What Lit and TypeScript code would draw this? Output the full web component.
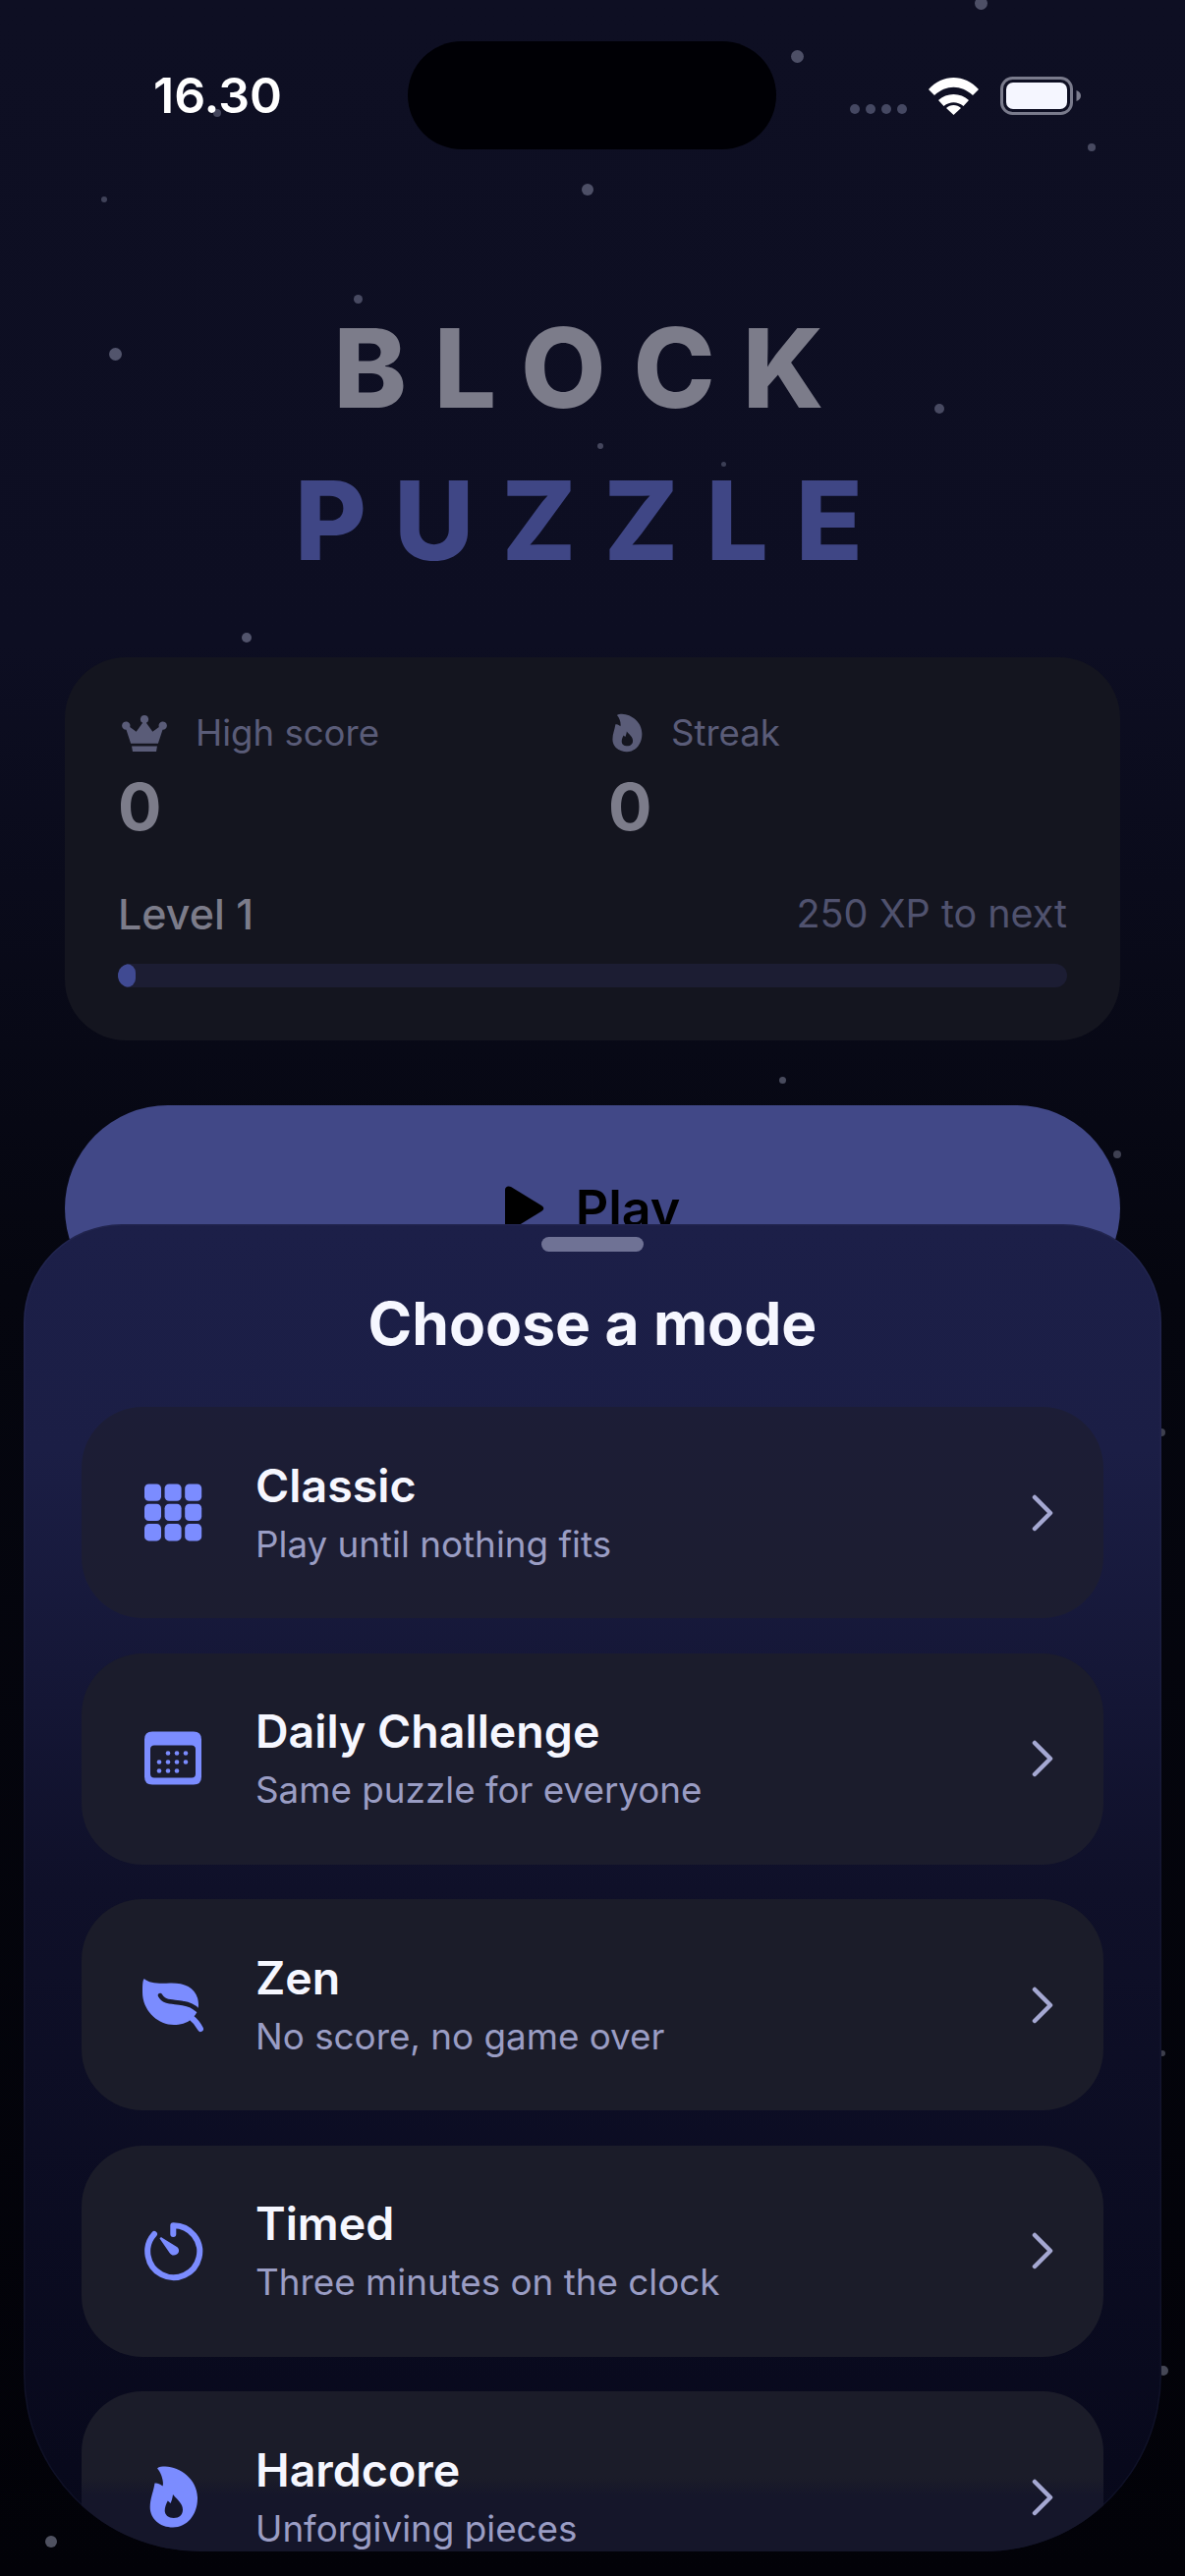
import { LitElement, html, css, svg } from 'lit';
import { customElement } from 'lit/decorators.js';

// background specks: x, y, size, opacity
const specks = [
  [998, 3, 13, .35], [811, 57, 13, .35], [1111, 150, 8, .32], [598, 193, 12, .35],
  [106, 203, 6, .28], [221, 115, 8, .3], [364, 304, 9, .32], [117, 360, 13, .38], [956, 416, 10, .32],
  [611, 454, 6, .3], [736, 472, 5, .26], [251, 649, 10, .38], [796, 1099, 7, .35],
  [1137, 1175, 8, .3], [52, 2587, 12, .4], [1182, 1458, 8, .3], [1183, 2090, 6, .3],
  [1184, 2413, 10, .35],
];

const modes = [
  { title: 'Classic', sub: 'Play until nothing fits', icon: 'grid' },
  { title: 'Daily Challenge', sub: 'Same puzzle for everyone', icon: 'calendar' },
  { title: 'Zen', sub: 'No score, no game over', icon: 'leaf' },
  { title: 'Timed', sub: 'Three minutes on the clock', icon: 'timer' },
  { title: 'Hardcore', sub: 'Unforgiving pieces', icon: 'flame' },
];

const flamePath = 'M26 5.500C28 3.500 31 3.500 34 3.500C50 4 67 17 67 36C67 53 56 65.500 42 65.500C29 65.500 18.700 57 18.700 45C18.700 36 22 30 23.500 20.500C25 20.500 29 21 31.500 23.500C33 20 30.500 10 26 5.500ZM42 32C41.500 36 40.500 39 39.500 41C38.500 40 37.500 39 36.700 38.500C35 42 33.700 45 33.700 48.500C33.700 53 37.500 56 42.700 56C48.500 56 52 52.500 52 47.500C52 41 46 37 42 32Z';

function modeIcon(name: string) {
  switch (name) {
    case 'grid':
      return svg`${[0, 1, 2].flatMap(r => [0, 1, 2].map(c => svg`<rect x=${13 + c * 20.6} y=${5.5 + r * 20.3} width="17" height="17.3" rx="4.5" />`))}`;
    case 'calendar':
      return svg`
        <path fill-rule="evenodd" d="M21 7.500H63Q71 7.500 71 15.500V53.500Q71 61.500 63 61.500H21Q13 61.500 13 53.500V15.500Q13 7.500 21 7.500ZM23 21.500Q19 21.500 19 25.500V50.500Q19 54.500 23 54.500H61Q65 54.500 65 50.500V25.500Q65 21.500 61 21.500Z" />
        ${[[37, 29.5], [46, 29.5], [55, 29.5], [28, 38.5], [37, 38.5], [46, 38.5], [55, 38.5], [28, 47.5], [37, 47.5], [46, 47.5]].map(([x, y]) => svg`<circle cx=${x} cy=${y} r="2.3" />`)}
      `;
    case 'leaf':
      return svg`
        <path d="M12.700 8C18 13 28 13 39 12.500C55 12 68 18 68 35C68 40 66 44 62 48C56 54 49 55 43 55C26 55 11 40 11 22C11 15 11 10 12.700 8Z" />
        <path d="M29 25C33 33 42 31 52 33C58 34 63 36 67 40" fill="none" stroke="#1b1c29" stroke-width="4.500" stroke-linecap="round" />
        <path d="M60 47C65 51 68 55 70 59" fill="none" stroke="#7b8cff" stroke-width="6" stroke-linecap="round" />
      `;
    case 'timer':
      return svg`
        <path d="M23 18A26.500 26.500 0 1 0 42.300 9.200V18" fill="none" stroke="#7b8cff" stroke-width="6" stroke-linecap="round" stroke-linejoin="round" />
        <path d="M28.500 22.500C29 21.500 30 21 31 21.700L46 31C49 33 48.500 37 46 38.500C43 40.500 40 39.500 38.500 37Z" />
      `;
    default:
      return svg`<path fill-rule="evenodd" d=${flamePath} />`;
  }
}

@customElement('app-root')
export class AppRoot extends LitElement {
  static styles = css`
    :host {
      display: block;
      width: 1206px;
      height: 2622px;
      font-family: Inter, 'Liberation Sans', sans-serif;
    }
    .screen {
      position: relative;
      width: 1206px;
      height: 2622px;
      overflow: hidden;
      background: linear-gradient(180deg, #0e0f23 0%, #0d0e22 25%, #05060f 50%, #020208 100%);
    }
    .speck {
      position: absolute;
      border-radius: 50%;
      background: #c3c8e6;
    }
    .status {
      position: relative;
      height: 152px;
      box-sizing: border-box;
      padding: 42px 106px 0 156px;
      display: flex;
      justify-content: space-between;
    }
    .time {
      font-size: 50px;
      font-weight: 600;
      color: #fff;
      line-height: 110px;
    }
    .island {
      position: absolute;
      left: 415px;
      top: 42px;
      width: 375px;
      height: 110px;
      border-radius: 55px;
      background: #000005;
    }
    .status-right {
      display: flex;
      align-items: center;
      height: 110px;
    }
    .title {
      margin-top: 145px;
      text-align: center;
      font-weight: 800;
      font-size: 112px;
      line-height: 155px;
      letter-spacing: 28px;
      color: #7c7c8a;
    }
    .title div + div {
      color: #3f4685;
    }
    .stats {
      margin: 62px 66px 0;
      height: 390px;
      box-sizing: border-box;
      padding: 52px 54px 0;
      background: #14151f;
      border-radius: 62px;
    }
    .stat-row {
      display: grid;
      grid-template-columns: 499px 1fr;
    }
    .stat-label {
      display: flex;
      align-items: center;
      gap: 29px;
      height: 50px;
      font-size: 36.6px;
      color: #5a5c78;
    }
    .stat-label svg {
      fill: #5a5c78;
      margin-left: 4px;
    }
    .stat-val {
      font-size: 66px;
      font-weight: 700;
      color: #7c7c8a;
      line-height: 80px;
      margin-top: 10px;
    }
    .level {
      display: flex;
      justify-content: space-between;
      align-items: center;
      margin-top: 44px;
      height: 50px;
    }
    .level b {
      font-size: 43px;
      font-weight: 500;
      color: #7c7c8a;
    }
    .level span {
      font-size: 39.5px;
      color: #50526e;
    }
    .bar {
      margin-top: 26px;
      height: 24px;
      border-radius: 12px;
      background: #1c1d33;
      overflow: hidden;
    }
    .fill {
      height: 100%;
      border-radius: 12px;
      background: #404a92;
    }
    .play {
      margin: 66px 66px 0;
      height: 210px;
      border-radius: 105px;
      background: #414887;
      display: flex;
      justify-content: center;
      align-items: center;
      gap: 32px;
      font-size: 52px;
      font-weight: 600;
      color: #000;
    }
    .sheet {
      position: absolute;
      left: 24px;
      top: 1246px;
      width: 1158px;
      height: 1351px;
      box-sizing: border-box;
      padding: 0 59px;
      overflow: hidden;
      border-radius: 100px 100px 180px 180px;
      background: linear-gradient(180deg, #1c1f48 0%, #1b1e45 17%, #0f1029 50%, #07081a 100%);
      box-shadow: inset 0 0 0 1.5px rgba(120, 125, 190, .07);
    }
    .handle {
      width: 104px;
      height: 15px;
      margin: 13px auto 0;
      border-radius: 8px;
      background: #6f7295;
    }
    h2 {
      margin: 38px 0 0;
      height: 70px;
      font-size: 60.5px;
      line-height: 70px;
      font-weight: 700;
      text-align: center;
      color: #f6f7ff;
    }
    .modes {
      display: flex;
      flex-direction: column;
      gap: 35.5px;
      margin-top: 50px;
    }
    .mode {
      flex: none;
      height: 215px;
      display: grid;
      grid-template-columns: 177px 1fr 40px;
      align-items: center;
      padding: 0 34px 0 0;
      border-radius: 62px;
      background: #1b1c29;
    }
    .mode:nth-child(1) {
      background: linear-gradient(180deg, #1c1d36, #1c1d30);
    }
    .mode:nth-child(2) {
      background: #1b1c2c;
    }
    .mode:last-child {
      background: linear-gradient(180deg, #1b1c29 88px, #15162a 106px);
    }
    .mode svg.ico {
      justify-self: start;
      margin-left: 51px;
      fill: #7b8cff;
    }
    .mode-title {
      font-size: 46.5px;
      line-height: 56px;
      font-weight: 600;
      color: #f6f7ff;
    }
    .mode-sub {
      margin-top: 8px;
      font-size: 36.8px;
      line-height: 48px;
      color: #9a9dc4;
    }
    .chev {
      fill: none;
      stroke: #a5a8d2;
      stroke-width: 4.5;
      stroke-linecap: round;
      stroke-linejoin: round;
    }
  `;

  render() {
    return html`
      <div class="screen">
        ${specks.map(
          ([x, y, s, o]) =>
            html`<i class="speck" style="left:${x - s / 2}px;top:${y - s / 2}px;width:${s}px;height:${s}px;opacity:${o}"></i>`,
        )}
        <div class="status">
          <div class="time">16.30</div>
          <div class="island"></div>
          <div class="status-right">
            <svg width="240" height="60" viewBox="0 0 240 60">
              ${[0, 1, 2, 3].map(i => svg`<circle cx=${10 + i * 16} cy="44" r="5" fill="#454862" />`)}
              <path fill="#fff" d="M85 24C99 8 122 8 136 24L130 30C118 19 103 19 91 30Z" />
              <path fill="#fff" d="M95 35C103 27 118 27 126 35L120.500 41C114 36 107 36 100.500 41Z" />
              <path fill="#fff" d="M103 43C107 39 114 39 118 43L110.500 50Z" />
              <rect x="159.500" y="12.500" width="71" height="36" rx="11" fill="none" stroke="#7a7b8c" stroke-width="3" />
              <rect x="164" y="17" width="62" height="27" rx="7" fill="#f5f6ff" />
              <path d="M235.500 25V36C238.500 35 240 33 240 30.500C240 28 238.500 26 235.500 25Z" fill="#7a7b8c" />
            </svg>
          </div>
        </div>
        <div class="title"><div>BLOCK</div><div>PUZZLE</div></div>
        <div class="stats">
          <div class="stat-row">
            <div>
              <div class="stat-label">
                <svg width="46" height="37" viewBox="0 0 48 40"><path d="M24 0a4.500 4.500 0 0 1 2 8.500L33 18l7-5a4.500 4.500 0 1 1 4 3L39 31H9L4 16a4.500 4.500 0 1 1 4-3l7 5 7-9.500A4.500 4.500 0 0 1 24 0ZM10 34H38L37 40H11Z" /></svg>
                High score
              </div>
              <div class="stat-val">0</div>
            </div>
            <div>
              <div class="stat-label">
                <svg width="31" height="40" viewBox="18 3 50 63"><path fill-rule="evenodd" d=${flamePath} /></svg>
                Streak
              </div>
              <div class="stat-val">0</div>
            </div>
          </div>
          <div class="level"><b>Level 1</b><span>250 XP to next</span></div>
          <div class="bar"><div class="fill" style="width:1.9%"></div></div>
        </div>
        <div class="play">
          <svg width="40" height="46" viewBox="0 0 40 46"><path d="M0 4C0 1 3 -.5 6 1L37 20C40 22 40 24 37 26L6 45C3 46.500 0 45 0 42Z" /></svg>
          Play
        </div>
        <div class="sheet">
          <div class="handle"></div>
          <h2>Choose a mode</h2>
          <div class="modes">
            ${modes.map(
              m => html`
                <div class="mode">
                  <svg class="ico" width="85" height="70" viewBox="0 0 85 70">${modeIcon(m.icon)}</svg>
                  <div>
                    <div class="mode-title">${m.title}</div>
                    <div class="mode-sub">${m.sub}</div>
                  </div>
                  <svg class="chev" width="24" height="40" viewBox="0 0 24 40"><path d="M4 4L20 20L4 36" /></svg>
                </div>
              `,
            )}
          </div>
        </div>
      </div>
    `;
  }
}
